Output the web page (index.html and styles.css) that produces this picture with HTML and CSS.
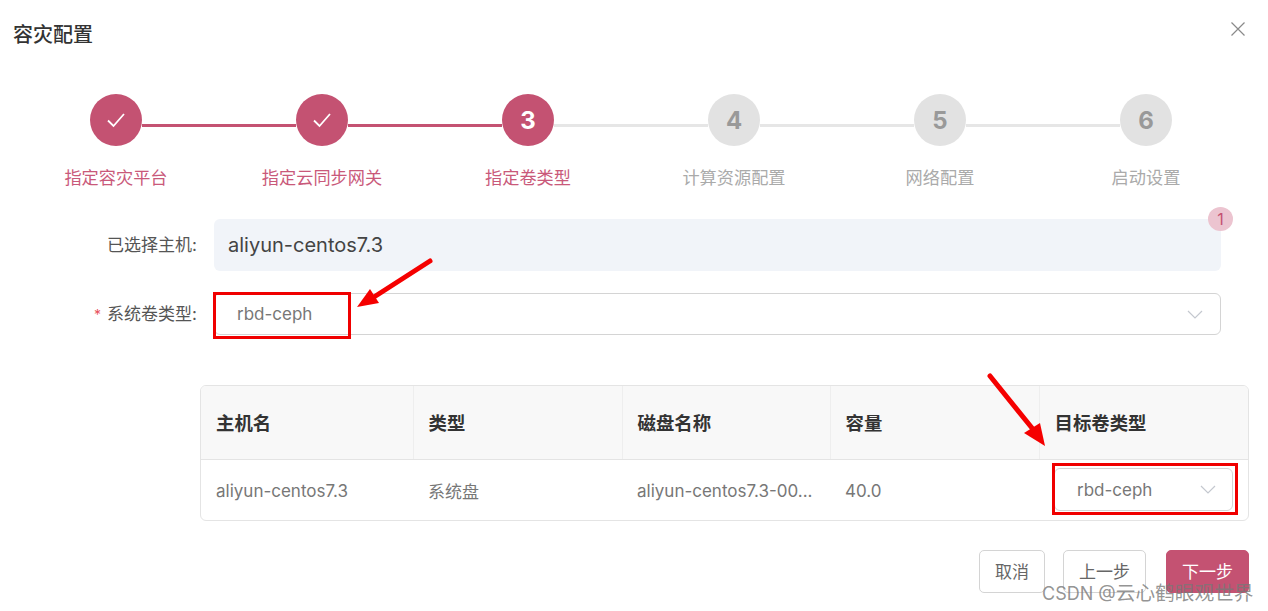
FILE: index.html
```html
<!DOCTYPE html>
<html lang="zh-CN">
<head>
    <meta charset="UTF-8">
    <title>容灾配置</title>
    <link rel="stylesheet" href="styles.css">
</head>
<body>
    <div class="dialog">
        <!-- Header -->
        <div class="dialog-header">
            <div class="dialog-title">容灾配置</div>
            <svg class="dialog-close" width="16" height="16" viewBox="0 0 16 16">
                <path d="M1.5 1.5L14.5 14.5M14.5 1.5L1.5 14.5" />
            </svg>
        </div>

        <!-- Steps -->
        <div class="steps">
            <div class="step done">
                <div class="step-circle">
                    <svg width="20" height="16" viewBox="0 0 20 16"><path d="M2 8.5L7.5 14L18 2" /></svg>
                </div>
                <div class="step-label">指定容灾平台</div>
            </div>
            <div class="step done">
                <div class="step-circle">
                    <svg width="20" height="16" viewBox="0 0 20 16"><path d="M2 8.5L7.5 14L18 2" /></svg>
                </div>
                <div class="step-label">指定云同步网关</div>
            </div>
            <div class="step active">
                <div class="step-circle">3</div>
                <div class="step-label">指定卷类型</div>
            </div>
            <div class="step">
                <div class="step-circle">4</div>
                <div class="step-label">计算资源配置</div>
            </div>
            <div class="step">
                <div class="step-circle">5</div>
                <div class="step-label">网络配置</div>
            </div>
            <div class="step">
                <div class="step-circle">6</div>
                <div class="step-label">启动设置</div>
            </div>
        </div>

        <!-- Form -->
        <div class="form">
            <div class="form-row">
                <div class="form-label">已选择主机:</div>
                <div class="host-box">
                    aliyun-centos7.3
                    <span class="badge">1</span>
                </div>
            </div>
            <div class="form-row form-row-select">
                <div class="form-label"><span class="required">*</span>系统卷类型:</div>
                <div class="select select-wide">
                    <span>rbd-ceph</span>
                    <svg class="select-arrow" width="16" height="9" viewBox="0 0 16 9"><path d="M1 1L8 8L15 1" /></svg>
                    <div class="red-box red-box-wide"></div>
                </div>
            </div>
        </div>

        <!-- Disk table -->
        <div class="table-wrap">
            <table class="disk-table">
                <thead>
                    <tr>
                        <th class="col-host">主机名</th>
                        <th class="col-type">类型</th>
                        <th class="col-disk">磁盘名称</th>
                        <th class="col-size">容量</th>
                        <th class="col-target">目标卷类型</th>
                    </tr>
                </thead>
                <tbody>
                    <tr>
                        <td>aliyun-centos7.3</td>
                        <td>系统盘</td>
                        <td>aliyun-centos7.3-00...</td>
                        <td>40.0</td>
                        <td class="cell-select">
                            <div class="select select-small">
                                <span>rbd-ceph</span>
                                <svg class="select-arrow" width="16" height="9" viewBox="0 0 16 9"><path d="M1 1L8 8L15 1" /></svg>
                                <div class="red-box red-box-small"></div>
                            </div>
                        </td>
                    </tr>
                </tbody>
            </table>
        </div>

        <!-- Footer -->
        <div class="dialog-footer">
            <button class="btn btn-cancel">取消</button>
            <button class="btn btn-prev">上一步</button>
            <button class="btn btn-primary">下一步</button>
        </div>
    </div>

    <!-- Annotation arrows -->
    <svg class="arrows" width="1268" height="611" viewBox="0 0 1268 611">
        <path class="arrow-shaft" d="M430 261L374 297" />
        <path class="arrow-head" d="M357 307L370 289L379 303Z" />
        <path class="arrow-shaft" d="M990 376L1032 428" />
        <path class="arrow-head" d="M1045 446L1024 433L1040 423Z" />
    </svg>

    <div class="watermark">CSDN @<span class="watermark-name">云心鹤眼观世界</span></div>
</body>
</html>
```

FILE: styles.css
```css
* {
    box-sizing: border-box;
}

html, body {
    height: 100%;
}

body {
    margin: 0;
    background-color: #ffffff;
    color: #555555;
    font-family: 'Inter', 'Noto Sans CJK SC', sans-serif;
    overflow: hidden;
    position: relative;
}

/* Header */
.dialog-header {
    display: flex;
    justify-content: space-between;
    align-items: flex-start;
    padding: 23px 22px 0 13px;
    height: 94px;
}

.dialog-title {
    font-size: 20px;
    line-height: 24px;
    font-weight: 500;
    color: #333333;
}

.dialog-close {
    margin-top: -2px;
    fill: none;
    stroke: #8a8a8a;
    stroke-width: 1.2;
}

/* Steps */
.steps {
    display: flex;
    padding: 0 19px 0 13px;
}

.step {
    flex: 0 0 206px;
    display: flex;
    flex-direction: column;
    align-items: center;
    position: relative;
}

.step::after {
    content: '';
    position: absolute;
    top: 30px;
    left: 129px;
    width: 154px;
    height: 3px;
    background-color: #e6e6e6;
}

.step:last-child::after {
    display: none;
}

.step.done::after {
    background-color: #c45272;
}

.step-circle {
    width: 52px;
    height: 52px;
    border-radius: 50%;
    background-color: #e2e2e2;
    color: #999999;
    font-size: 24px;
    font-weight: 700;
    display: flex;
    align-items: center;
    justify-content: center;
}

.step.done .step-circle,
.step.active .step-circle {
    background-color: #c45272;
    color: #ffffff;
}

.step-circle svg {
    fill: none;
    stroke: #ffffff;
    stroke-width: 1.8;
}

.step-label {
    margin-top: 20px;
    font-size: 17.2px;
    line-height: 24px;
    color: #aaaaaa;
    white-space: nowrap;
}

.step.done .step-label,
.step.active .step-label {
    color: #c9597a;
}

/* Form */
.form {
    padding: 29px 47px 0 13px;
}

.form-row {
    display: flex;
    align-items: center;
    gap: 17px;
}

.form-row-select {
    margin-top: 22px;
}

.form-label {
    flex: 0 0 184px;
    padding-bottom: 3px;
    text-align: right;
    font-size: 17px;
    color: #555555;
}

.required {
    color: #e8505b;
    font-size: 14px;
    margin-right: 6px;
}

.host-box {
    flex: 1;
    height: 52px;
    padding: 0 14px;
    background-color: #f1f4f9;
    border-radius: 6px;
    font-size: 20px;
    color: #444444;
    display: flex;
    align-items: center;
    position: relative;
}

.badge {
    position: absolute;
    top: -12px;
    right: -12px;
    width: 25px;
    height: 24px;
    border-radius: 50%;
    background-color: #ecc4d0;
    color: #c45272;
    font-size: 16px;
    display: flex;
    align-items: center;
    justify-content: center;
}

.select {
    display: flex;
    align-items: center;
    justify-content: space-between;
    background-color: #ffffff;
    border: 1px solid #d4d4d4;
    border-radius: 6px;
    font-size: 17px;
    color: #777777;
    position: relative;
}

.select-wide {
    flex: 1;
    height: 42px;
    padding: 0 17px 0 22px;
}

.select-small {
    width: 179px;
    height: 43px;
    padding: 0 16px 0 22px;
}

.select-arrow {
    fill: none;
    stroke: #c4c8cf;
    stroke-width: 1.2;
}

.red-box {
    position: absolute;
    border: 3px solid #f00000;
}

.red-box-wide {
    top: -2px;
    left: -2px;
    width: 138px;
    height: 47px;
}

.red-box-small {
    top: -6px;
    left: -3px;
    width: 186px;
    height: 52px;
}

/* Table */
.table-wrap {
    margin: 50px 19px 0 200px;
    border: 1px solid #e4e4e4;
    border-radius: 6px;
    overflow: hidden;
}

.disk-table {
    width: 100%;
    border-collapse: collapse;
    table-layout: fixed;
}

.disk-table th {
    height: 73px;
    padding: 0 15px;
    background-color: #f8f8f8;
    border-bottom: 1px solid #e4e4e4;
    border-right: 1px solid #eeeeee;
    font-size: 18.4px;
    font-weight: 600;
    color: #333333;
    text-align: left;
}

.disk-table th:last-child {
    border-right: none;
}

.disk-table td {
    height: 61px;
    padding: 2px 15px 0;
    font-size: 17px;
    color: #777777;
    white-space: nowrap;
    overflow: hidden;
}

.disk-table td.cell-select {
    padding: 0 0 0 15px;
    overflow: visible;
}

.col-host {
    width: 212px;
}

.col-type {
    width: 209px;
}

.col-disk {
    width: 208px;
}

.col-size {
    width: 209px;
}

/* Footer */
.dialog-footer {
    display: flex;
    justify-content: flex-end;
    padding: 29px 19px 0 0;
}

.btn {
    height: 43px;
    border: 1px solid #d4d4d4;
    border-radius: 5px;
    background-color: #ffffff;
    color: #666666;
    font-family: inherit;
    font-size: 17px;
    padding: 0 0 2px;
}

.btn-cancel {
    width: 66px;
    margin-right: 18px;
}

.btn-prev {
    width: 83px;
    margin-right: 20px;
}

.btn-primary {
    width: 83px;
    background-color: #c45272;
    border-color: #c45272;
    color: #ffffff;
}

/* Annotations */
.arrows {
    position: absolute;
    top: 0;
    left: 0;
    pointer-events: none;
}

.arrow-shaft {
    fill: none;
    stroke: #f50000;
    stroke-width: 5;
    stroke-linecap: round;
}

.arrow-head {
    fill: #f50000;
}

.watermark {
    position: absolute;
    top: 581px;
    left: 1042px;
    font-size: 18px;
    line-height: 24px;
    color: rgba(120, 120, 120, 0.8);
    white-space: nowrap;
}

.watermark-name {
    font-size: 19.7px;
}
```
